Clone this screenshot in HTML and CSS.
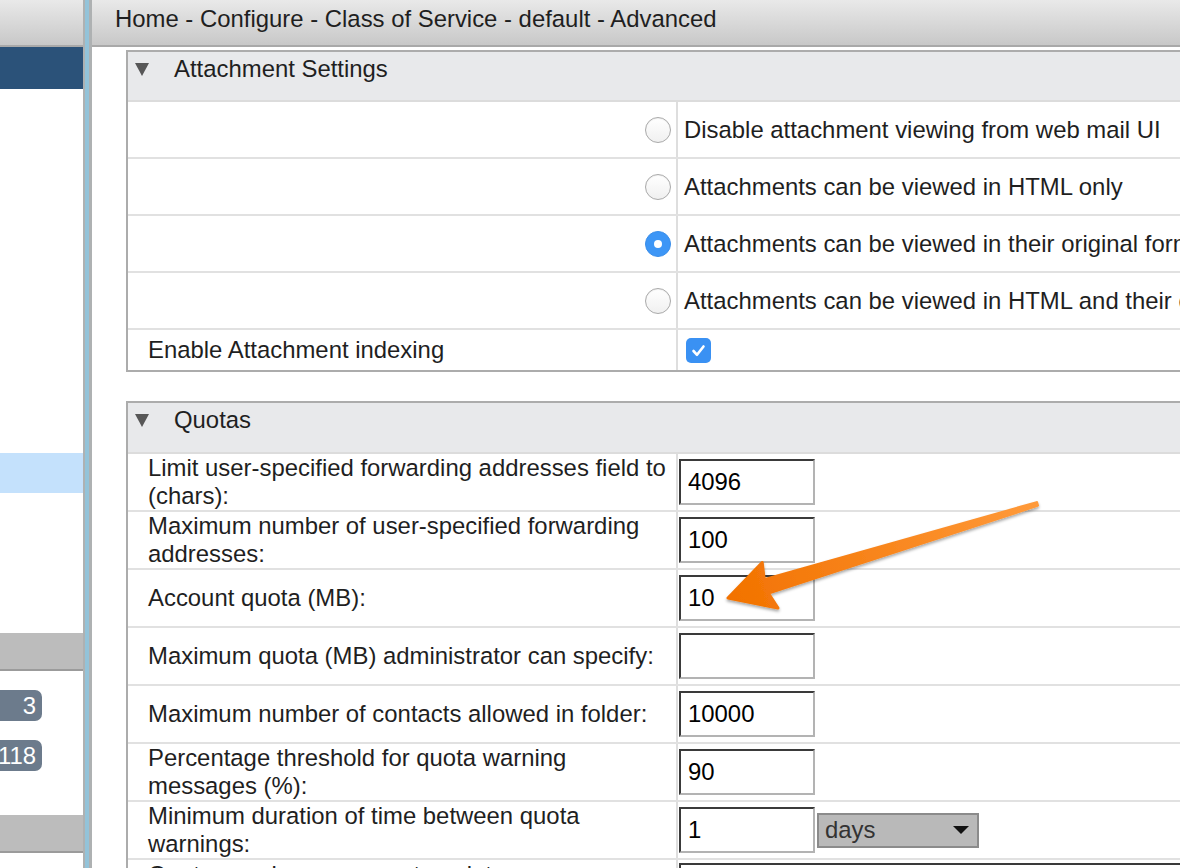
FILE: index.html
```html
<!DOCTYPE html>
<html lang="en">
<head>
<meta charset="utf-8">
<title>Class of Service - default - Advanced</title>
<link rel="stylesheet" href="styles.css">
</head>
<body>
<div class="app">
  <aside class="sidebar">
    <div class="side-head"></div>
    <div class="side-item side-item--active"></div>
    <div class="side-tree"></div>
    <div class="side-item side-item--selected"></div>
    <div class="side-tree side-tree--short"></div>
    <div class="side-section"></div>
    <ul class="side-counts">
      <li class="count-row"><span class="badge">3</span></li>
      <li class="count-row"><span class="badge">118</span></li>
    </ul>
    <div class="side-section"></div>
  </aside>
  <div class="splitter"></div>
  <main class="main">
    <header class="crumb">Home - Configure - Class of Service - default - Advanced</header>
    <div class="content">
      <section class="panel">
        <div class="panel-head">
          <svg class="twisty" viewBox="0 0 14 14"><polygon points="0,1 14,1 7,14" /></svg>
          <span class="panel-title">Attachment Settings</span>
        </div>
        <div class="row row--attach">
          <div class="cell-label cell-radio"><span class="radio"></span></div>
          <div class="cell-value">Disable attachment viewing from web mail UI</div>
        </div>
        <div class="row row--attach">
          <div class="cell-label cell-radio"><span class="radio"></span></div>
          <div class="cell-value">Attachments can be viewed in HTML only</div>
        </div>
        <div class="row row--attach">
          <div class="cell-label cell-radio"><span class="radio radio--on"></span></div>
          <div class="cell-value">Attachments can be viewed in their original format only</div>
        </div>
        <div class="row row--attach">
          <div class="cell-label cell-radio"><span class="radio"></span></div>
          <div class="cell-value">Attachments can be viewed in HTML and their original format</div>
        </div>
        <div class="row row--check">
          <div class="cell-label">Enable Attachment indexing</div>
          <div class="cell-value cell-check">
            <span class="checkbox"><svg viewBox="0 0 25 25"><path d="M7.5 13 L11 16.8 L17.5 8.5" /></svg></span>
          </div>
        </div>
      </section>

      <section class="panel panel--quotas">
        <div class="panel-head">
          <svg class="twisty" viewBox="0 0 14 14"><polygon points="0,1 14,1 7,14" /></svg>
          <span class="panel-title">Quotas</span>
        </div>
        <div class="row row--quota">
          <div class="cell-label">Limit user-specified forwarding addresses field to<br>(chars):</div>
          <div class="cell-field"><input class="field" type="text" value="4096"></div>
        </div>
        <div class="row row--quota">
          <div class="cell-label">Maximum number of user-specified forwarding<br>addresses:</div>
          <div class="cell-field"><input class="field" type="text" value="100"></div>
        </div>
        <div class="row row--quota">
          <div class="cell-label">Account quota (MB):</div>
          <div class="cell-field"><input class="field" type="text" value="10"></div>
        </div>
        <div class="row row--quota">
          <div class="cell-label">Maximum quota (MB) administrator can specify:</div>
          <div class="cell-field"><input class="field" type="text" value=""></div>
        </div>
        <div class="row row--quota">
          <div class="cell-label">Maximum number of contacts allowed in folder:</div>
          <div class="cell-field"><input class="field" type="text" value="10000"></div>
        </div>
        <div class="row row--quota">
          <div class="cell-label">Percentage threshold for quota warning<br>messages (%):</div>
          <div class="cell-field"><input class="field" type="text" value="90"></div>
        </div>
        <div class="row row--quota">
          <div class="cell-label">Minimum duration of time between quota<br>warnings:</div>
          <div class="cell-field">
            <input class="field" type="text" value="1">
            <div class="select"><span>days</span><svg class="select-caret" viewBox="0 0 16 8"><polygon points="0,0 16,0 8,8" /></svg></div>
          </div>
        </div>
        <div class="row row--tall">
          <div class="cell-label cell-label--top">Quota warning message template:</div>
          <div class="cell-field cell-field--top"><div class="textarea"></div></div>
        </div>
      </section>
    </div>
  </main>
</div>

<svg class="callout" viewBox="0 0 1180 868" width="1180" height="868">
  <defs>
    <linearGradient id="arrowFill" gradientUnits="userSpaceOnUse" x1="1037" y1="504" x2="728" y2="598">
      <stop offset="0" stop-color="#ff9a3a"/>
      <stop offset="1" stop-color="#f27200"/>
    </linearGradient>
    <filter id="arrowShadow" x="-10%" y="-20%" width="120%" height="150%">
      <feDropShadow dx="0" dy="2" stdDeviation="1.6" flood-color="#000" flood-opacity="0.35"/>
    </filter>
  </defs>
  <path class="arrow" filter="url(#arrowShadow)" d="M728 598 L778 608 L768.3 593.1 L1037.5 505.4 L1036.7 502.6 L764.2 579.7 L762.2 562.5 Z"/>
</svg>
</body>
</html>
```

FILE: styles.css
```css
html, body {
  margin: 0;
  padding: 0;
}

body {
  width: 1180px;
  height: 868px;
  overflow: hidden;
  position: relative;
  background: #fff;
  font-family: "Liberation Sans", Arial, Helvetica, sans-serif;
  font-size: 23.9px;
  color: #1f1f1f;
}

.app {
  display: flex;
  height: 868px;
}

/* ---------- sidebar ---------- */
.sidebar {
  width: 83px;
  flex: none;
  overflow: hidden;
  display: flex;
  flex-direction: column;
  background: #fff;
}

.side-head {
  flex: none;
  height: 45px;
  border-bottom: 2px solid #a9a9a9;
  background: linear-gradient(#e9e9e9, #c8c8c8);
}

.side-item {
  flex: none;
  height: 40px;
}

.side-item--active {
  height: 42px;
  background: #2b5279;
}

.side-item--selected {
  background: #c4e1fc;
}

.side-tree {
  flex: none;
  height: 364px;
}

.side-tree--short {
  height: 140px;
}

.side-section {
  flex: none;
  height: 36px;
  background: #bcbcbc;
  border-bottom: 2px solid #9b9b9b;
}

.side-counts {
  list-style: none;
  margin: 0;
  padding: 9px 0 35px;
  flex: none;
}

.count-row {
  height: 50px;
  display: flex;
  align-items: center;
  justify-content: flex-end;
  padding-right: 41px;
}

.badge {
  flex: none;
  min-width: 60px;
  height: 31px;
  line-height: 31px;
  padding: 0 6px;
  box-sizing: border-box;
  border-radius: 7px;
  background: #6c7b8c;
  color: #fff;
  text-align: right;
}

.splitter {
  flex: none;
  width: 9px;
  box-sizing: border-box;
  border-left: 2px solid #aeb1b2;
  border-right: 3px solid #aeb1b2;
  background: #93c3d9;
}

/* ---------- main ---------- */
.main {
  flex: 1;
  min-width: 0;
  overflow: hidden;
}

.crumb {
  height: 47px;
  box-sizing: border-box;
  padding: 5px 0 0 23px;
  line-height: 28px;
  white-space: nowrap;
  border-bottom: 2px solid #a9a9a9;
  background: linear-gradient(#e9e9e9, #c8c8c8);
}

.content {
  padding: 3px 0 0 34px;
}

.panel {
  width: 1120px;
  border: 2px solid #acacac;
  margin-bottom: 29px;
}

.panel-head {
  height: 50px;
  box-sizing: border-box;
  padding: 3px 0 0 7px;
  display: flex;
  align-items: flex-start;
  line-height: 28px;
  background: #e8e9eb;
  border-bottom: 2px solid #dcdcdc;
}

.panel--quotas .panel-head {
  height: 51px;
}

.twisty {
  flex: none;
  width: 14px;
  height: 14px;
  margin-top: 7px;
  fill: #575757;
}

.panel-title {
  margin-left: 25px;
}

.row {
  display: grid;
  grid-template-columns: 550px 1fr;
  border-bottom: 2px solid #e1e1e1;
}

.row:last-child {
  border-bottom: 0;
}

.row--attach {
  height: 55px;
}

.row--check {
  height: 40px;
}

.row--quota {
  height: 56px;
}

.row--tall {
  height: 140px;
}

.cell-label {
  display: flex;
  align-items: center;
  padding-left: 20px;
  line-height: 28px;
  border-right: 2px solid #dedede;
}

.cell-label--top {
  align-items: flex-start;
  padding-top: 1px;
}

.cell-radio {
  justify-content: flex-end;
  padding-right: 5px;
}

.cell-value {
  display: flex;
  align-items: center;
  padding-left: 6px;
  white-space: nowrap;
  overflow: hidden;
}

.cell-check {
  padding-left: 8px;
}

.cell-field {
  display: flex;
  align-items: center;
  gap: 2px;
  padding-left: 1px;
}

.cell-field--top {
  align-items: flex-start;
  padding-top: 3px;
}

/* ---------- controls ---------- */
.radio {
  width: 26px;
  height: 26px;
  box-sizing: border-box;
  border-radius: 50%;
  border: 1px solid #a9a9a9;
  background: linear-gradient(#ffffff, #f0f0f0);
  box-shadow: inset 0 1px 1px rgba(0, 0, 0, 0.06);
  display: flex;
  align-items: center;
  justify-content: center;
}

.radio--on {
  border-color: #3a8eea;
  background: #3d96f6;
  box-shadow: none;
}

.radio--on::after {
  content: "";
  width: 8px;
  height: 8px;
  border-radius: 50%;
  background: #fff;
}

.checkbox {
  width: 25px;
  height: 25px;
  border-radius: 5px;
  background: #3a91f3;
  display: flex;
}

.checkbox svg {
  width: 25px;
  height: 25px;
  fill: none;
  stroke: #fff;
  stroke-width: 2.6;
  stroke-linecap: round;
  stroke-linejoin: round;
}

.field {
  width: 136px;
  height: 46px;
  box-sizing: border-box;
  margin: 0;
  padding: 0 0 0 7px;
  border: 2px solid;
  border-color: #3a3a3a #b3b3b3 #b3b3b3 #3a3a3a;
  background: #fff;
  font-family: inherit;
  font-size: 23.9px;
  color: #000;
  outline: none;
}

.select {
  width: 162px;
  height: 35px;
  box-sizing: border-box;
  border: 2px solid #8b8b8b;
  background: #b9b9b9;
  color: #333;
  display: flex;
  align-items: center;
  justify-content: space-between;
  padding: 0 8px 0 6px;
}

.select-caret {
  width: 16px;
  height: 8px;
  fill: #111;
}

.textarea {
  width: 520px;
  height: 120px;
  box-sizing: border-box;
  border: 2px solid;
  border-color: #3a3a3a #b3b3b3 #b3b3b3 #3a3a3a;
  background: #fff;
}

/* ---------- callout arrow ---------- */
.callout {
  position: absolute;
  left: 0;
  top: 0;
  pointer-events: none;
}

.arrow {
  fill: url(#arrowFill);
  stroke: url(#arrowFill);
  stroke-width: 3;
  stroke-linejoin: round;
}
```
